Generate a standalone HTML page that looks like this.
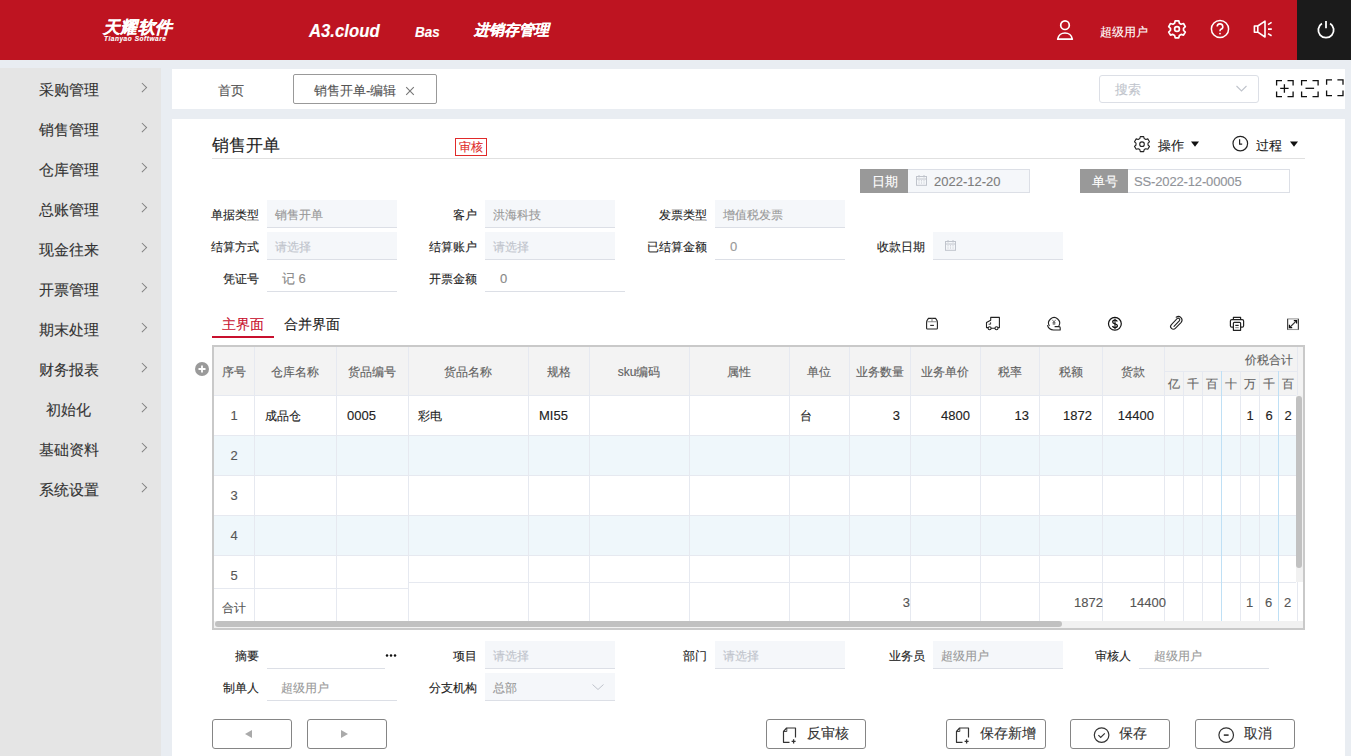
<!DOCTYPE html>
<html><head><meta charset="utf-8">
<style>
*{box-sizing:border-box;margin:0;padding:0}
html,body{width:1351px;height:756px;overflow:hidden;background:#e9edf2;font-family:"Liberation Sans",sans-serif;color:#333;-webkit-text-stroke-width:0.12px}
.a{position:absolute}
.t{position:absolute;white-space:nowrap;line-height:1.15}
#hdr{left:0;top:0;width:1351px;height:60px;background:#be1421}
#pw{left:1297px;top:0;width:54px;height:60px;background:#1b1b1b}
#side{left:0;top:68px;width:161px;height:688px;background:#e5e5e5}
.mi{position:absolute;left:0;width:161px;height:20px;font-size:15px;color:#333}
.mi span{position:absolute;left:0;width:137px;text-align:center;top:0;line-height:20px}
.mi i{position:absolute;left:139px;top:3.5px;width:6.5px;height:6.5px;border-right:1px solid #808080;border-top:1px solid #808080;transform:rotate(45deg)}
#tabbar{left:172px;top:69px;width:1173px;height:40px;background:#fff}
#main{left:172px;top:119px;width:1173px;height:637px;background:#fff}
.lbl{position:absolute;font-size:12px;color:#222;text-align:right;white-space:nowrap;line-height:16px}
.inp{position:absolute;height:28px;background:#f5f7fa;border-bottom:1px solid #dcdfe6}
.inpw{position:absolute;height:28px;background:#fff;border-bottom:1px solid #dcdfe6}
.iv{position:absolute;font-size:12px;color:#999;white-space:nowrap;line-height:16px}
.ph{color:#c0c4cc}
.vl{position:absolute;width:1px;background:#e6e9f0}
.hl{position:absolute;height:1px;background:#e6e9f0}
.th{position:absolute;font-size:12px;color:#606060;white-space:nowrap;line-height:14px;text-align:center}
.td{position:absolute;font-size:12px;color:#222;white-space:nowrap;line-height:14px}
.btn{position:absolute;height:30px;border:1px solid #858585;border-radius:3px;background:#fff}
.bt{position:absolute;font-size:13px;color:#333;white-space:nowrap;line-height:15px}
</style></head><body>
<!-- header -->
<div id="hdr" class="a"></div>
<div id="pw" class="a"></div>
<div class="t" style="left:103px;top:18px;font-size:17px;font-weight:900;font-style:italic;color:#fff;letter-spacing:0.3px">天耀软件</div>
<div class="t" style="left:104px;top:35px;font-size:6.5px;font-weight:bold;font-style:italic;color:#fff;letter-spacing:0.55px">Tianyao Software</div>
<div class="t" style="left:309px;top:20px;font-size:19px;font-weight:bold;font-style:italic;color:#fff;transform:scaleX(0.88);transform-origin:0 0">A3.cloud</div>
<div class="t" style="left:415px;top:23px;font-size:15px;font-weight:bold;font-style:italic;color:#fff;transform:scaleX(0.9);transform-origin:0 0">Bas</div>
<div class="t" style="left:474px;top:21px;font-size:15px;font-weight:bold;font-style:italic;color:#fff">进销存管理</div>
<div class="t" style="left:1100px;top:26px;font-size:12px;color:#fff;font-weight:500">超级用户</div>

<!-- sidebar -->
<div id="side" class="a"></div>
<div class="mi" style="top:80px"><span>采购管理</span><i></i></div>
<div class="mi" style="top:120px"><span>销售管理</span><i></i></div>
<div class="mi" style="top:160px"><span>仓库管理</span><i></i></div>
<div class="mi" style="top:200px"><span>总账管理</span><i></i></div>
<div class="mi" style="top:240px"><span>现金往来</span><i></i></div>
<div class="mi" style="top:280px"><span>开票管理</span><i></i></div>
<div class="mi" style="top:320px"><span>期末处理</span><i></i></div>
<div class="mi" style="top:360px"><span>财务报表</span><i></i></div>
<div class="mi" style="top:400px"><span>初始化</span><i></i></div>
<div class="mi" style="top:440px"><span>基础资料</span><i></i></div>
<div class="mi" style="top:480px"><span>系统设置</span><i></i></div>

<!-- tab bar -->
<div id="tabbar" class="a"></div>
<div class="t" style="left:218px;top:84px;font-size:13px;color:#555">首页</div>
<div class="a" style="left:293px;top:74px;width:144px;height:30px;border:1px solid #999;border-radius:2px;background:#fff"></div>
<div class="t" style="left:314px;top:84px;font-size:13px;color:#555">销售开单-编辑</div>
<svg class="a" style="left:405px;top:86px" width="10" height="10" viewBox="0 0 10 10" stroke="#777" stroke-width="1.1"><path d="M1.2 1.2 L8.8 8.8 M8.8 1.2 L1.2 8.8"/></svg>
<div class="a" style="left:1099px;top:75px;width:160px;height:28px;border:1px solid #dcdfe6;border-radius:3px;background:#fff"></div>
<div class="t" style="left:1115px;top:83px;font-size:13px;color:#c0c4cc">搜索</div>

<!-- main -->
<div id="main" class="a"></div>
<div class="t" style="left:212px;top:136px;font-size:17px;color:#222">销售开单</div>
<div class="a" style="left:455px;top:138px;width:32px;height:18px;border:1px solid #e02a2a"></div>
<div class="t" style="left:459px;top:141px;font-size:12px;color:#e02a2a">审核</div>
<div class="a" style="left:212px;top:158px;width:1093px;height:1px;background:#e0e0e0"></div>
<div class="t" style="left:1158px;top:139px;font-size:13px;color:#222">操作</div>
<div class="t" style="left:1256px;top:139px;font-size:13px;color:#222">过程</div>



<!-- date / number -->
<div class="a" style="left:860px;top:169px;width:48px;height:24px;background:#999"></div>
<div class="t" style="left:872px;top:175px;font-size:13px;color:#fff">日期</div>
<div class="a" style="left:908px;top:169px;width:122px;height:24px;background:#f5f7fa;border:1px solid #dcdfe6;border-left:none"></div>
<svg class="a" style="left:915px;top:174px" width="13" height="13" viewBox="0 0 13 13" fill="none" stroke="#c0c4cc" stroke-width="1"><rect x="1.5" y="2.5" width="10" height="8.8"/><path d="M1.5 5 h10 M4 1 v2.5 M9 1 v2.5"/><path d="M4 6.2 v3.6 M6.5 6.2 v3.6 M9 6.2 v3.6" stroke-width="0.8" stroke-dasharray="1.2 1"/></svg>
<div class="t" style="left:934px;top:175px;font-size:13px;color:#7d7d7d">2022-12-20</div>
<div class="a" style="left:1080px;top:169px;width:48px;height:24px;background:#999"></div>
<div class="t" style="left:1092px;top:175px;font-size:13px;color:#fff">单号</div>
<div class="a" style="left:1128px;top:169px;width:162px;height:24px;background:#fff;border:1px solid #dcdfe6;border-left:none"></div>
<div class="t" style="left:1134px;top:175px;font-size:13px;letter-spacing:-0.15px;color:#909399">SS-2022-12-00005</div>

<!-- form rows -->
<div class="lbl" style="left:199px;width:60px;top:207px">单据类型</div>
<div class="inp" style="left:267px;top:200px;width:130px"></div>
<div class="iv" style="left:275px;top:207px">销售开单</div>
<div class="lbl" style="left:417px;width:60px;top:207px">客户</div>
<div class="inp" style="left:485px;top:200px;width:130px"></div>
<div class="iv" style="left:493px;top:207px">洪海科技</div>
<div class="lbl" style="left:607px;width:100px;top:207px">发票类型</div>
<div class="inp" style="left:715px;top:200px;width:130px"></div>
<div class="iv" style="left:723px;top:207px">增值税发票</div>

<div class="lbl" style="left:199px;width:60px;top:239px">结算方式</div>
<div class="inp" style="left:267px;top:232px;width:130px"></div>
<div class="iv ph" style="left:275px;top:239px">请选择</div>
<div class="lbl" style="left:417px;width:60px;top:239px">结算账户</div>
<div class="inp" style="left:485px;top:232px;width:130px"></div>
<div class="iv ph" style="left:493px;top:239px">请选择</div>
<div class="lbl" style="left:607px;width:100px;top:239px">已结算金额</div>
<div class="inpw" style="left:715px;top:232px;width:130px"></div>
<div class="iv" style="left:730px;top:239px;font-size:13px">0</div>
<div class="lbl" style="left:825px;width:100px;top:239px">收款日期</div>
<div class="inp" style="left:933px;top:232px;width:130px"></div>
<svg class="a" style="left:944px;top:239px" width="13" height="13" viewBox="0 0 13 13" fill="none" stroke="#c0c4cc" stroke-width="1"><rect x="1.5" y="2.5" width="10" height="8.8"/><path d="M1.5 5 h10 M4 1 v2.5 M9 1 v2.5"/><path d="M4 6.2 v3.6 M6.5 6.2 v3.6 M9 6.2 v3.6" stroke-width="0.8" stroke-dasharray="1.2 1"/></svg>

<div class="lbl" style="left:199px;width:60px;top:271px">凭证号</div>
<div class="inpw" style="left:267px;top:264px;width:130px"></div>
<div class="iv" style="left:282px;top:271px;font-size:13px;color:#888">记 6</div>
<div class="lbl" style="left:417px;width:60px;top:271px">开票金额</div>
<div class="inpw" style="left:485px;top:264px;width:140px"></div>
<div class="iv" style="left:500px;top:271px;font-size:13px;color:#888">0</div>

<!-- tabs -->
<div class="t" style="left:222px;top:316px;font-size:14px;color:#c8102e">主界面</div>
<div class="a" style="left:212px;top:336px;width:62px;height:2px;background:#c8102e"></div>
<div class="t" style="left:284px;top:316px;font-size:14px;color:#222">合并界面</div>
<!-- table -->
<div class="a" style="left:212px;top:345px;width:93px;height:0"></div>
<div class="a" style="left:212px;top:345px;width:1093px;height:285px;border:2px solid #c9c9c9;background:#fff"></div>
<div class="a" style="left:214px;top:347px;width:1089px;height:48px;background:#f3f3f3"></div>
<div class="a" style="left:214px;top:436px;width:1082px;height:39px;background:#eff7fb"></div>
<div class="a" style="left:214px;top:516px;width:1082px;height:39px;background:#eff7fb"></div>
<div class="hl" style="left:214px;top:395px;width:1082px"></div>
<div class="hl" style="left:214px;top:435px;width:1082px"></div>
<div class="hl" style="left:214px;top:475px;width:1082px"></div>
<div class="hl" style="left:214px;top:515px;width:1082px"></div>
<div class="hl" style="left:214px;top:555px;width:1082px"></div>
<div class="hl" style="left:214px;top:588px;width:194px"></div>
<div class="hl" style="left:408px;top:582px;width:888px"></div>
<div class="hl" style="left:1164px;top:371px;width:133px"></div>
<div class="vl" style="left:254px;top:347px;height:274px;background:#e6e9f0"></div>
<div class="vl" style="left:336px;top:347px;height:274px;background:#e6e9f0"></div>
<div class="vl" style="left:408px;top:347px;height:274px;background:#e6e9f0"></div>
<div class="vl" style="left:528px;top:347px;height:274px;background:#e6e9f0"></div>
<div class="vl" style="left:589px;top:347px;height:274px;background:#e6e9f0"></div>
<div class="vl" style="left:689px;top:347px;height:274px;background:#e6e9f0"></div>
<div class="vl" style="left:789px;top:347px;height:274px;background:#e6e9f0"></div>
<div class="vl" style="left:849px;top:347px;height:274px;background:#e6e9f0"></div>
<div class="vl" style="left:910px;top:347px;height:274px;background:#e6e9f0"></div>
<div class="vl" style="left:980px;top:347px;height:274px;background:#e6e9f0"></div>
<div class="vl" style="left:1039px;top:347px;height:274px;background:#e6e9f0"></div>
<div class="vl" style="left:1102px;top:347px;height:274px;background:#e6e9f0"></div>
<div class="vl" style="left:1164px;top:347px;height:274px;background:#e6e9f0"></div>
<div class="vl" style="left:1183px;top:371px;height:250px;background:#e6e9f0"></div>
<div class="vl" style="left:1202px;top:371px;height:250px;background:#e6e9f0"></div>
<div class="vl" style="left:1221px;top:371px;height:250px;background:#bfe0f5"></div>
<div class="vl" style="left:1240px;top:371px;height:250px;background:#e6e9f0"></div>
<div class="vl" style="left:1259px;top:371px;height:250px;background:#e6e9f0"></div>
<div class="vl" style="left:1278px;top:371px;height:250px;background:#bfe0f5"></div>
<div class="vl" style="left:1297px;top:347px;height:274px;background:#e6e9f0"></div>
<div class="th" style="left:214px;width:40px;top:365px">序号</div>
<div class="th" style="left:254px;width:82px;top:365px">仓库名称</div>
<div class="th" style="left:336px;width:72px;top:365px">货品编号</div>
<div class="th" style="left:408px;width:120px;top:365px">货品名称</div>
<div class="th" style="left:528px;width:61px;top:365px">规格</div>
<div class="th" style="left:589px;width:100px;top:365px">sku编码</div>
<div class="th" style="left:689px;width:100px;top:365px">属性</div>
<div class="th" style="left:789px;width:60px;top:365px">单位</div>
<div class="th" style="left:849px;width:61px;top:365px">业务数量</div>
<div class="th" style="left:910px;width:70px;top:365px">业务单价</div>
<div class="th" style="left:980px;width:59px;top:365px">税率</div>
<div class="th" style="left:1039px;width:63px;top:365px">税额</div>
<div class="th" style="left:1102px;width:62px;top:365px">货款</div>
<div class="th" style="left:1245px;top:353px">价税合计</div>
<div class="th" style="left:1164px;width:19px;top:377px">亿</div>
<div class="th" style="left:1183px;width:19px;top:377px">千</div>
<div class="th" style="left:1202px;width:19px;top:377px">百</div>
<div class="th" style="left:1221px;width:19px;top:377px">十</div>
<div class="th" style="left:1240px;width:19px;top:377px">万</div>
<div class="th" style="left:1259px;width:19px;top:377px">千</div>
<div class="th" style="left:1278px;width:19px;top:377px">百</div>
<div class="th" style="left:214px;width:40px;top:409px;color:#555;font-size:13px">1</div>
<div class="th" style="left:214px;width:40px;top:449px;color:#555;font-size:13px">2</div>
<div class="th" style="left:214px;width:40px;top:489px;color:#555;font-size:13px">3</div>
<div class="th" style="left:214px;width:40px;top:529px;color:#555;font-size:13px">4</div>
<div class="th" style="left:214px;width:40px;top:569px;color:#555;font-size:13px">5</div>
<div class="td" style="left:265px;top:409px">成品仓</div>
<div class="td" style="left:347px;top:409px;font-size:13px">0005</div>
<div class="td" style="left:418px;top:409px">彩电</div>
<div class="td" style="left:539px;top:409px;font-size:13px">MI55</div>
<div class="td" style="left:800px;top:409px">台</div>
<div class="td" style="left:800px;width:100px;text-align:right;top:409px;font-size:13px">3</div>
<div class="td" style="left:870px;width:100px;text-align:right;top:409px;font-size:13px">4800</div>
<div class="td" style="left:929px;width:100px;text-align:right;top:409px;font-size:13px">13</div>
<div class="td" style="left:992px;width:100px;text-align:right;top:409px;font-size:13px">1872</div>
<div class="td" style="left:1054px;width:100px;text-align:right;top:409px;font-size:13px">14400</div>
<div class="td" style="left:1240px;width:19px;text-align:center;top:409px;font-size:13px;padding-left:1px">1</div>
<div class="td" style="left:1259px;width:19px;text-align:center;top:409px;font-size:13px;padding-left:1px">6</div>
<div class="td" style="left:1278px;width:19px;text-align:center;top:409px;font-size:13px;padding-left:1px">2</div>
<div class="th" style="left:214px;width:40px;top:601px;color:#555">合计</div>
<div class="td" style="left:810px;width:100px;text-align:right;top:596px;font-size:13px;color:#555">3</div>
<div class="td" style="left:1003px;width:100px;text-align:right;top:596px;font-size:13px;color:#555">1872</div>
<div class="td" style="left:1066px;width:100px;text-align:right;top:596px;font-size:13px;color:#555">14400</div>
<div class="td" style="left:1240px;width:19px;text-align:center;top:596px;font-size:13px;color:#555">1</div>
<div class="td" style="left:1259px;width:19px;text-align:center;top:596px;font-size:13px;color:#555">6</div>
<div class="td" style="left:1278px;width:19px;text-align:center;top:596px;font-size:13px;color:#555">2</div>
<div class="a" style="left:1296px;top:395px;width:7px;height:187px;background:#f1f1f1"></div>
<div class="a" style="left:1296px;top:396px;width:6px;height:172px;background:#c1c1c1;border-radius:3px"></div>
<div class="a" style="left:214px;top:621px;width:1089px;height:7px;background:#f1f1f1"></div>
<div class="a" style="left:215px;top:621px;width:847px;height:6px;background:#c1c1c1;border-radius:3px"></div>
<svg class="a" style="left:194px;top:361px" width="16" height="16" viewBox="0 0 16 16"><circle cx="8" cy="8" r="7" fill="#9a9a9a"/><path d="M8 4.5 v7 M4.5 8 h7" stroke="#fff" stroke-width="1.8"/></svg>

<!-- table toolbar icons -->
<svg class="a" style="left:922px;top:314px" width="20" height="20" viewBox="0 0 20 20" fill="none" stroke="#222" stroke-width="1.1" stroke-linejoin="round">
<path d="M6.4 4.4 H13.6 L15.4 7.2 V14.2 Q15.4 15 14.6 15 H5.4 Q4.6 15 4.6 14.2 V7.2 Z"/><path d="M4.6 7.7 H15.4 M10 4.4 V7.7" stroke="#888"/><path d="M8.2 11.4 H11.9"/></svg>
<svg class="a" style="left:983px;top:314px" width="20" height="20" viewBox="0 0 20 20" fill="none" stroke="#222" stroke-width="1.1" stroke-linejoin="round">
<path d="M5.2 13.6 H3.5 V8.6 L7.7 6.2 V3.4 H16.4 V13.6 H15.1 M8 14.3 H12"/><circle cx="6.6" cy="14.2" r="1.5"/><circle cx="13.5" cy="14.2" r="1.5"/><path d="M7.6 8.3 V10.2 H5.6" stroke-width="0.9"/></svg>
<svg class="a" style="left:1044px;top:314px" width="20" height="20" viewBox="0 0 20 20" fill="none" stroke="#222" stroke-width="1.1" stroke-linejoin="round">
<path d="M5.4 12 A5.5 5.5 0 1 1 14.8 12"/><path d="M3.4 11.3 Q5 16 9.5 16 H16.2 V13.7 Q16.2 12.6 15 12.6 H10.6"/><path d="M8.4 5.8 L10 8.2 L11.6 5.8 M10 8.2 V11 M8.5 8.6 H11.5 M8.5 9.9 H11.5" stroke-width="0.8" stroke="#555"/></svg>
<svg class="a" style="left:1105px;top:314px" width="20" height="20" viewBox="0 0 20 20" fill="none" stroke="#111" stroke-width="1.2">
<circle cx="9.9" cy="9.8" r="6.4"/><path d="M12.3 7.5 Q11.8 6.1 10 6.1 Q7.7 6.1 7.7 7.9 Q7.7 9.3 10 9.8 Q12.4 10.3 12.4 11.8 Q12.4 13.6 10 13.6 Q8 13.6 7.5 12" stroke-width="1.3"/><path d="M10 4.6 V15" stroke-width="1.1"/></svg>
<svg class="a" style="left:1166px;top:314px" width="20" height="20" viewBox="0 0 20 20" fill="none" stroke="#222" stroke-width="1.1" stroke-linecap="round">
<path d="M8 12.4 L13.5 6.6 A1.6 1.6 0 0 0 11.3 4.4 L5.4 10.6 A2.7 2.7 0 0 0 9.3 14.4 L15.2 8.3 A3.6 3.6 0 0 0 10.2 3.2"/></svg>
<svg class="a" style="left:1227px;top:314px" width="20" height="20" viewBox="0 0 20 20" fill="none" stroke="#222" stroke-width="1.2" stroke-linejoin="round">
<path d="M6.4 5.5 V3.3 H13.6 V5.5"/><path d="M6.4 13.2 H4.8 Q3.4 13.2 3.4 11.7 V7.1 Q3.4 5.7 4.8 5.7 H15.2 Q16.6 5.7 16.6 7.1 V11.7 Q16.6 13.2 15.2 13.2 H13.6"/><path d="M6.4 16.3 V9.3 Q6.4 8.4 7.3 8.4 H12.7 Q13.6 8.4 13.6 9.3 V16.3 Z"/><path d="M8.3 11.4 H11.7"/><path d="M8.3 13.6 H11.7" stroke="#999"/></svg>
<svg class="a" style="left:1283px;top:314px" width="20" height="20" viewBox="0 0 20 20" fill="none" stroke-width="1.1">
<rect x="4.6" y="4.9" width="10.8" height="10.6" stroke="#999"/><path d="M4.6 4.9 V15.5 M15.4 4.9 V15.5" stroke="#444"/><path d="M6.6 13.5 L13.4 6.8" stroke="#333"/><path d="M10.8 6.6 H13.6 V9.4 M6.4 10.8 V13.7 H9.2" stroke="#111" stroke-width="1.2"/></svg>

<!-- bottom form -->
<div class="lbl" style="left:199px;width:60px;top:648px">摘要</div>
<div class="inpw" style="left:267px;top:641px;width:118px"></div>
<svg class="a" style="left:380px;top:650px" width="20" height="12" viewBox="0 0 20 12" fill="#111"><circle cx="7" cy="5.6" r="1.25"/><circle cx="11" cy="5.6" r="1.25"/><circle cx="15" cy="5.6" r="1.25"/></svg>
<div class="lbl" style="left:417px;width:60px;top:648px">项目</div>
<div class="inp" style="left:485px;top:641px;width:130px"></div>
<div class="iv ph" style="left:493px;top:648px">请选择</div>
<div class="lbl" style="left:647px;width:60px;top:648px">部门</div>
<div class="inp" style="left:715px;top:641px;width:130px"></div>
<div class="iv ph" style="left:723px;top:648px">请选择</div>
<div class="lbl" style="left:865px;width:60px;top:648px">业务员</div>
<div class="inp" style="left:933px;top:641px;width:130px"></div>
<div class="iv" style="left:941px;top:648px">超级用户</div>
<div class="lbl" style="left:1071px;width:60px;top:648px">审核人</div>
<div class="inpw" style="left:1139px;top:641px;width:130px"></div>
<div class="iv" style="left:1154px;top:648px">超级用户</div>

<div class="lbl" style="left:199px;width:60px;top:680px">制单人</div>
<div class="inpw" style="left:267px;top:673px;width:130px"></div>
<div class="iv" style="left:281px;top:680px">超级用户</div>
<div class="lbl" style="left:417px;width:60px;top:680px">分支机构</div>
<div class="inp" style="left:485px;top:673px;width:130px"></div>
<div class="iv" style="left:493px;top:680px">总部</div>
<svg class="a" style="left:590px;top:682px" width="16" height="10" viewBox="0 0 16 10" fill="none" stroke="#c0c4cc" stroke-width="1"><path d="M2.5 2.5 l5.5 5 l5.5-5"/></svg>

<!-- buttons -->
<div class="btn" style="left:212px;top:719px;width:80px"></div>
<svg class="a" style="left:243px;top:728px" width="12" height="12" viewBox="0 0 12 12"><path d="M2 6 L9 2 V10 Z" fill="#aaa"/></svg>
<div class="btn" style="left:307px;top:719px;width:80px"></div>
<svg class="a" style="left:338px;top:728px" width="12" height="12" viewBox="0 0 12 12"><path d="M10 6 L3 2 V10 Z" fill="#aaa"/></svg>

<div class="btn" style="left:766px;top:719px;width:100px"></div>
<svg class="a" style="left:780px;top:725px" width="20" height="20" viewBox="0 0 20 20" fill="none" stroke="#333" stroke-width="1.2" stroke-linejoin="round"><path d="M9.5 17.3 H3.5 V6.5 L6.6 3 H15.5 V12.5"/><path d="M6.8 3 V6.5 H3.5" stroke-width="0.9"/><path d="M13.6 14.3 V18.4 M11.6 16.3 H15.6" stroke-width="1.3"/></svg>
<div class="bt" style="left:807px;top:726px;font-size:14px">反审核</div>
<div class="btn" style="left:946px;top:719px;width:100px"></div>
<svg class="a" style="left:953px;top:725px" width="20" height="20" viewBox="0 0 20 20" fill="none" stroke="#333" stroke-width="1.2" stroke-linejoin="round"><path d="M9.5 17.3 H3.5 V6.5 L6.6 3 H15.5 V12.5"/><path d="M6.8 3 V6.5 H3.5" stroke-width="0.9"/><path d="M13.6 14.3 V18.4 M11.6 16.3 H15.6" stroke-width="1.3"/></svg>
<div class="bt" style="left:980px;top:726px;font-size:14px">保存新增</div>
<div class="btn" style="left:1070px;top:719px;width:100px"></div>
<svg class="a" style="left:1091px;top:725px" width="20" height="20" viewBox="0 0 20 20" fill="none" stroke="#333" stroke-width="1.2"><circle cx="10.6" cy="10.1" r="7.3"/><path d="M7.4 10.2 L9.7 12.5 L13.8 8.3"/></svg>
<div class="bt" style="left:1119px;top:726px;font-size:14px">保存</div>
<div class="btn" style="left:1195px;top:719px;width:100px"></div>
<svg class="a" style="left:1216px;top:725px" width="20" height="20" viewBox="0 0 20 20" fill="none" stroke="#333" stroke-width="1.2"><circle cx="10.2" cy="10.1" r="7.3"/><path d="M7.8 10.1 H12.6" stroke-width="1.6"/></svg>
<div class="bt" style="left:1244px;top:726px;font-size:14px">取消</div>
<!-- header icons -->
<svg class="a" style="left:1050px;top:15px" width="30" height="30" viewBox="0 0 30 30" fill="none" stroke="#fff" stroke-width="1.7">
<circle cx="15" cy="10.2" r="4.3"/><path d="M7.7 24.2 A7.4 7.4 0 0 1 22.3 24.2 Z" stroke-linejoin="round"/></svg>
<svg class="a" style="left:1162px;top:15px" width="30" height="30" viewBox="0 0 30 30" fill="none" stroke="#fff" stroke-width="1.7" stroke-linejoin="round">
<path d="M13.2 5.8 h3.6 l0.6 2.4 l1.7 1 l2.4-0.7 l1.8 3.1 l-1.8 1.7 v2 l1.8 1.7 l-1.8 3.1 l-2.4-0.7 l-1.7 1 l-0.6 2.4 h-3.6 l-0.6-2.4 l-1.7-1 l-2.4 0.7 l-1.8-3.1 l1.8-1.7 v-2 l-1.8-1.7 l1.8-3.1 l2.4 0.7 l1.7-1 z"/>
<circle cx="15" cy="14" r="2.4"/></svg>
<svg class="a" style="left:1205px;top:14px" width="30" height="30" viewBox="0 0 30 30" fill="none" stroke="#fff" stroke-width="1.5">
<circle cx="15" cy="15" r="8.6"/><path d="M12.2 12.6 A2.8 2.8 0 1 1 15.9 15.3 C15.1 15.6 15 16.2 15 17.2" stroke-width="1.6"/><circle cx="15" cy="19.6" r="0.9" fill="#fff" stroke="none"/></svg>
<svg class="a" style="left:1248px;top:14px" width="30" height="30" viewBox="0 0 30 30" fill="none" stroke="#fff" stroke-width="1.6" stroke-linejoin="round">
<path d="M6.4 12 h3.4 l7.2-4.8 v15.8 l-7.2-4.8 h-3.4 z M9.8 12 v6.2"/><path d="M20 10.6 l3.6-2.2 M20 15.1 h3.8 M20 19.6 l3.6 2.2"/></svg>
<svg class="a" style="left:1310.5px;top:14.7px" width="30" height="30" viewBox="0 0 30 30" fill="none" stroke="#fff" stroke-width="1.8" stroke-linecap="butt">
<path d="M10.9 8.5 A7.7 7.7 0 1 0 19.1 8.5"/><path d="M15 6.1 v7.2"/></svg>
<!-- tabbar icons -->
<svg class="a" style="left:1270px;top:72px" width="81" height="32" viewBox="0 0 81 32" fill="none" stroke="#111" stroke-width="1.3">
<path d="M6.6 13.6 v-5 h5.4 M17.5 8.6 h5.6 v5 M6.6 19.4 v5.3 h5.4 M17.5 24.7 h5.6 v-5.3"/><path d="M10.2 16.3 h8.4 M14.4 12.3 v8.4"/>
<path d="M31.6 13.6 v-5 h5.4 M42.5 8.6 h5.6 v5 M31.6 19.4 v5.3 h5.4 M42.5 24.7 h5.6 v-5.3"/><path d="M35.5 16.3 h8.6"/>
<path d="M56.6 12.8 v-5 h5.4 M67.4 7.8 h5.6 v5 M56.6 18.4 v5.3 h5.4 M67.4 23.7 h5.6 v-5.3"/></svg>
<svg class="a" style="left:1230px;top:80px" width="20" height="16" viewBox="0 0 20 16" fill="none" stroke="#c0c4cc" stroke-width="1.1"><path d="M6.5 6 l5 5 l5-5"/></svg>
<!-- title icons -->
<svg class="a" style="left:1130px;top:133px" width="24" height="22" viewBox="0 0 24 22" fill="none" stroke="#222" stroke-width="1.1" stroke-linejoin="round">
<path d="M10.3 3.6 h3.4 l0.5 2 l1.6 0.9 l2-0.6 l1.7 2.9 l-1.5 1.4 v1.8 l1.5 1.4 l-1.7 2.9 l-2-0.6 l-1.6 0.9 l-0.5 2 h-3.4 l-0.5-2 l-1.6-0.9 l-2 0.6 l-1.7-2.9 l1.5-1.4 v-1.8 l-1.5-1.4 l1.7-2.9 l2 0.6 l1.6-0.9 z"/>
<circle cx="12" cy="11.2" r="2.3"/></svg>
<svg class="a" style="left:1190px;top:140px" width="10" height="8" viewBox="0 0 10 8"><path d="M1 1.5 h8 l-4 5.3 z" fill="#111"/></svg>
<svg class="a" style="left:1230px;top:134px" width="20" height="20" viewBox="0 0 20 20" fill="none" stroke="#222" stroke-width="1.2">
<circle cx="10.3" cy="9.6" r="7.3"/><path d="M9.6 5.2 v4.9 h2.6"/></svg>
<svg class="a" style="left:1289px;top:140px" width="10" height="8" viewBox="0 0 10 8"><path d="M1 1.5 h8 l-4 5.3 z" fill="#111"/></svg>
</body></html>
